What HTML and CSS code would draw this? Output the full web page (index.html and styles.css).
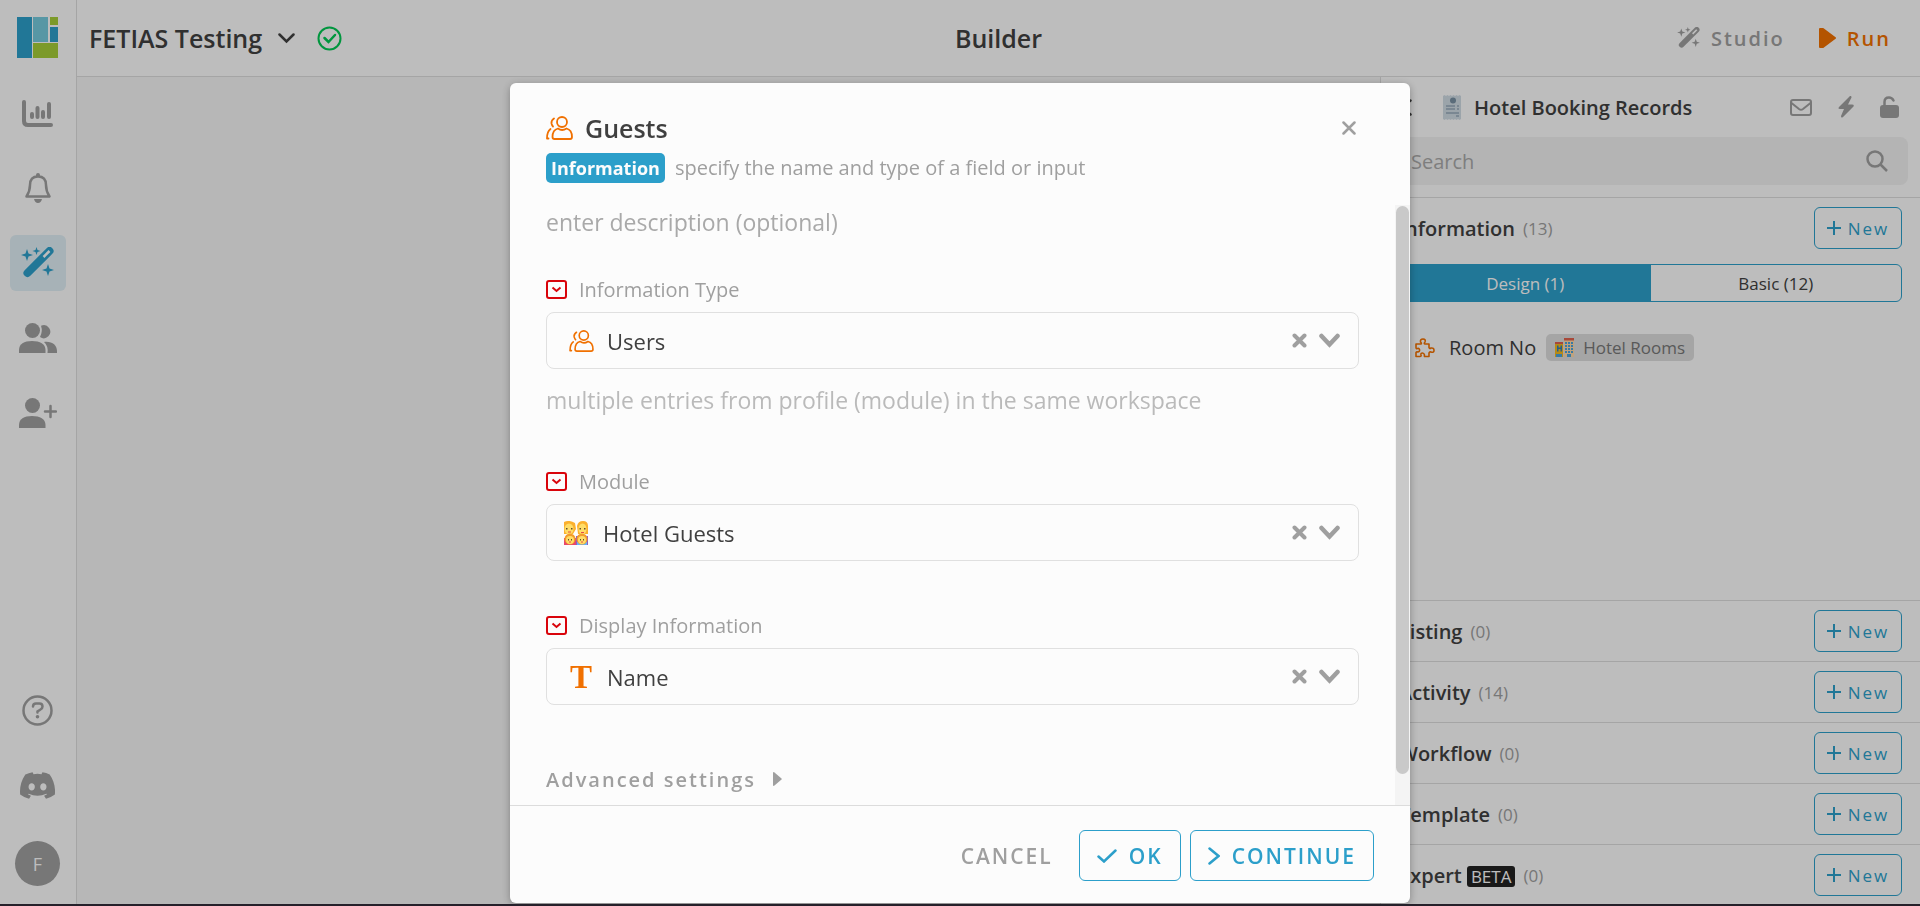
FILE: index.html
```html
<!DOCTYPE html>
<html lang="en">
<head>
  <meta charset="UTF-8">
  <meta name="viewport" content="width=device-width, initial-scale=1.0">
  <title>FETIAS Testing - Builder</title>
  <link rel="stylesheet" href="styles.css">
</head>
<body>
  <!-- shared icons -->
  <svg class="sprite" width="0" height="0" aria-hidden="true">
    <symbol id="i-wand" viewBox="0 0 32 32">
      <path d="M6 26 L28 4" stroke="currentColor" stroke-width="8" stroke-linecap="round"/>
      <path class="slot" d="M22 10 L28 4" stroke-width="2.500"/>
      <path fill="currentColor" d="M5.500 2 L7 6.500 L11.500 8 L7 9.500 L5.500 14 L4 9.500 L-.500 8 L4 6.500Z M15 0 L16 3 L19 4 L16 5 L15 8 L14 5 L11 4 L14 3Z M26.500 17 L28 21.500 L32.500 23 L28 24.500 L26.500 29 L25 24.500 L20.500 23 L25 21.500Z"/>
    </symbol>
    <symbol id="i-users" viewBox="0 0 27 24">
      <g fill="none" stroke="currentColor" stroke-width="1.800" stroke-linecap="round" stroke-linejoin="round">
        <circle cx="16" cy="6" r="5"/>
        <path d="M12 12.500 C8 13.500 6.500 17 6.500 21 Q6.500 23 8.500 23 H24 Q26 23 26 21 C26 17 24.500 13.500 20.500 12.500 Q16 15.500 12 12.500Z"/>
        <path d="M8 2.500 Q5 4.500 5.500 7.500 Q6 9.500 7 10.500 M4.500 13 Q1 15.500 1 22.500 H2.500"/>
      </g>
    </symbol>
    <symbol id="i-required" viewBox="0 0 21 19">
      <rect x="1" y="1" width="19" height="17" rx="2" fill="none" stroke="#d9040b" stroke-width="2"/>
      <path d="M6.500 7.500 L10.500 11 L14.500 7.500" fill="none" stroke="#d9040b" stroke-width="2"/>
    </symbol>
    <symbol id="i-clear" viewBox="0 0 15 15">
      <path d="M2.500 2.500 L12.500 12.500 M12.500 2.500 L2.500 12.500" stroke="currentColor" stroke-width="4" stroke-linecap="round"/>
    </symbol>
    <symbol id="i-down" viewBox="0 0 21 15">
      <path d="M2.500 3 L10.500 11.500 L18.500 3" fill="none" stroke="currentColor" stroke-width="4.500" stroke-linecap="round"/>
    </symbol>
    <symbol id="i-plus" viewBox="0 0 14 14">
      <path d="M7 0 V14 M0 7 H14" stroke="currentColor" stroke-width="2"/>
    </symbol>
  </svg>

  <div class="app">
    <nav class="sidebar">
      <a class="logo" href="#" aria-label="Home">
        <svg width="41" height="41" viewBox="0 0 41 41">
          <path fill="#2c9fca" d="M0 0h15v41H0z M33 10h8v15h-8z"/>
          <path fill="#74cadc" d="M16 0h15v25H16z"/>
          <path fill="#a6ce39" d="M33 0h8v8h-8z M16 26h25v15H16z"/>
        </svg>
      </a>
      <a class="nav-item" href="#" aria-label="Dashboard">
        <svg width="31" height="27" viewBox="0 0 31 27" fill="none" stroke="currentColor" stroke-width="4" stroke-linecap="round">
          <path d="M2 2 V21 Q2 25 6 25 H29"/>
          <path d="M10 14 V17 M15.500 8 V17 M21 12 V17 M27 4 V17"/>
        </svg>
      </a>
      <a class="nav-item" href="#" aria-label="Notifications">
        <svg width="28" height="30" viewBox="0 0 28 30">
          <path fill="none" stroke="currentColor" stroke-width="2.500" stroke-linejoin="round" d="M2.500 23.500 Q6 18 6 12 Q6 3.500 14 3.500 Q22 3.500 22 12 Q22 18 25.500 23.500Z"/>
          <path fill="currentColor" d="M12 3 V2 Q12 0 14 0 Q16 0 16 2 V3Z M10 26 H18 Q17 30 14 30 Q11 30 10 26Z"/>
        </svg>
      </a>
      <a class="nav-item active" href="#" aria-label="Builder">
        <svg width="33" height="32"><use href="#i-wand"/></svg>
      </a>
      <a class="nav-item" href="#" aria-label="Users">
        <svg width="38" height="30" viewBox="0 0 38 30" fill="currentColor">
          <circle cx="13.500" cy="7.500" r="7.500"/>
          <path d="M0 30 V27 C0 21 5 18 13 18 C21 18 26.500 21 26.500 27 V30Z"/>
          <path d="M22 2.800 A6.500 6.500 0 1 1 21 14 Q24 8.500 22 2.800Z M25 19 C33 18 38 22 38 28 V30 H28.500 Q29.500 23 25 19Z"/>
        </svg>
      </a>
      <a class="nav-item" href="#" aria-label="Invite user">
        <svg width="38" height="30" viewBox="0 0 38 30" fill="currentColor">
          <circle cx="13.500" cy="7.500" r="7.500"/>
          <path d="M0 30 V27 C0 21 5 18 13 18 C21 18 26.500 21 26.500 27 V30Z"/>
          <path d="M31.500 8 V19 M26 13.500 H37" stroke="currentColor" stroke-width="2.500" stroke-linecap="round"/>
        </svg>
      </a>
      <div class="nav-bottom">
        <a class="nav-item" href="#" aria-label="Help">
          <svg width="31" height="31" viewBox="0 0 31 31" fill="none" stroke="currentColor" stroke-width="2.500">
            <circle cx="15.500" cy="15.500" r="14"/>
            <path stroke-linecap="round" d="M11 11.500 Q11 8.500 14 8.500 H17.500 Q20.500 8.500 20.500 11.500 Q20.500 13.500 18.500 14.500 L15.500 16.500 V17.500"/>
            <circle cx="15.500" cy="21.800" r="1.800" fill="currentColor" stroke="none"/>
          </svg>
        </a>
        <a class="nav-item" href="#" aria-label="Discord">
          <svg width="35" height="27" viewBox="0 0 127 96">
            <path fill="currentColor" d="M107.700 8.070A105 105 0 0 0 81.470 0a72 72 0 0 0-3.360 6.830 98 98 0 0 0-29.110 0A72 72 0 0 0 45.640 0a106 106 0 0 0-26.250 8.090C2.790 32.650-1.710 56.600.540 80.210a106 106 0 0 0 32.170 16.150 78 78 0 0 0 6.890-11.110 68 68 0 0 1-10.850-5.180c.910-.660 1.800-1.340 2.660-2a76 76 0 0 0 64.320 0c.870.710 1.760 1.390 2.660 2a69 69 0 0 1-10.870 5.190 77 77 0 0 0 6.890 11.100 106 106 0 0 0 32.190-16.140c2.640-27.380-4.510-51.110-18.900-72.150ZM42.450 65.690C36.180 65.690 31 60 31 53s5-12.740 11.430-12.740S54 46 53.890 53s-5.050 12.690-11.440 12.690Zm42.240 0C78.410 65.690 73.250 60 73.250 53s5-12.740 11.440-12.740S96.230 46 96.120 53s-5.040 12.690-11.430 12.690Z"/>
          </svg>
        </a>
        <button class="avatar">F</button>
      </div>
    </nav>

    <div class="workspace">
      <header class="topbar">
        <div class="topbar-left">
          <button class="app-name">FETIAS Testing
            <svg width="17" height="11" viewBox="0 0 17 11"><path d="M1.500 1.500 L8.500 8.500 L15.500 1.500" fill="none" stroke="currentColor" stroke-width="2.500" stroke-linecap="round"/></svg>
          </button>
          <svg class="saved" width="25" height="25" viewBox="0 0 25 25" fill="none" stroke="#00c853" stroke-width="2">
            <circle cx="12.500" cy="12.500" r="11"/>
            <path d="M7.500 12 L11.500 16 L18 9" stroke-width="2.500" stroke-linecap="round"/>
          </svg>
        </div>
        <h1>Builder</h1>
        <div class="topbar-right">
          <button class="studio"><svg width="23" height="22"><use href="#i-wand"/></svg>Studio</button>
          <button class="run"><svg width="17" height="20" viewBox="0 0 17 20"><path fill="currentColor" stroke="currentColor" stroke-width="2" stroke-linejoin="round" d="M1 1 H4 L16 10 L4 19 H1Z"/></svg>Run</button>
        </div>
      </header>

      <div class="main">
        <main class="canvas"></main>
        <aside class="panel">
          <div class="panel-head">
            <button class="icon-btn" aria-label="Back"><svg width="13" height="17" viewBox="0 0 13 17"><path d="M11.500 1.500 L3 8.500 L11.500 15.500" fill="none" stroke="#404040" stroke-width="2.500" stroke-linecap="round"/></svg></button>
            <svg class="receipt" width="20" height="25" viewBox="0 0 20 25">
              <path fill="#cfdbe3" d="M0 1 l1.500 -1 1.500 1 1.500 -1 1.500 1 1.500 -1 1.500 1 1.500 -1 1.500 1 1.500 -1 1.500 1 1.500 -1 1.500 1 V24 l-1.500 1 -1.500 -1 -1.500 1 -1.500 -1 -1.500 1 -1.500 -1 -1.500 1 -1.500 -1 -1.500 1 -1.500 -1 -1.500 1 -1.500 -1Z"/>
              <circle cx="10" cy="5.500" r="3" fill="#7890a3"/>
              <path d="M3 11 H12 M14 11 H16 M3 14 H12 M14 14 H16 M3 18 H16 M13 21 H16" stroke="#7890a3" stroke-width="1.200"/>
            </svg>
            <h2>Hotel Booking Records</h2>
            <div class="panel-actions">
              <button class="icon-btn" aria-label="Mail"><svg width="22" height="17" viewBox="0 0 22 17" fill="none" stroke="currentColor" stroke-width="2"><rect x="1" y="1" width="20" height="15" rx="2"/><path d="M1.500 4 L9 10 Q11 11.500 13 10 L20.500 4"/></svg></button>
              <button class="icon-btn" aria-label="Automation"><svg width="16" height="22" viewBox="0 0 16 22"><path fill="currentColor" d="M12 0 L1 11 Q-.500 13 2 13 H6 L3 20 Q3 22.500 5 21 L15.500 10.500 Q16.500 8.500 14 8.500 H10 L13.500 1.500 Q13.500 -.500 12 0Z"/></svg></button>
              <button class="icon-btn" aria-label="Unlock"><svg width="19" height="22" viewBox="0 0 19 22"><path d="M4.500 11 V6 Q4.500 1.500 9 1.500 Q12 1.500 13.500 4.500" fill="none" stroke="currentColor" stroke-width="2.500" stroke-linecap="round"/><rect y="9" width="19" height="13" rx="3" fill="currentColor"/></svg></button>
            </div>
          </div>
          <div class="search">
            <input type="text" placeholder="Search" aria-label="Search">
            <svg width="22" height="22" viewBox="0 0 22 22" fill="none" stroke="currentColor" stroke-width="2.500"><circle cx="9" cy="9" r="7.500"/><path d="M14.500 14.500 L21 21"/></svg>
          </div>

          <section class="section grow">
            <div class="section-head">
              <h3>Information</h3><span class="count">(13)</span>
              <button class="new-btn"><svg width="14" height="14"><use href="#i-plus"/></svg>New</button>
            </div>
            <div class="tabs">
              <button class="tab selected">Design (1)</button>
              <button class="tab">Basic (12)</button>
            </div>
            <div class="field-row">
              <svg width="20" height="20" viewBox="0 0 20 20" fill="none" stroke="#f07000" stroke-width="1.600" stroke-linejoin="round">
                <path d="M1 6 H6 Q7 5.500 5.500 4 Q5 1 8 1 Q11 1 10 4 Q8.500 5.500 10 6 H14 V9.500 Q14.500 11 16 10 Q19 9.500 19 12.500 Q19 15 16 14 Q14.500 13.500 14 15 V18.500 H10 Q9 18.500 9.500 17 Q9 15 7.500 15 Q5.500 15 6 17 Q6.500 18.500 5 18.500 H1 V14.500 Q1.500 13.500 3 14 Q5 13.500 4.500 11.500 Q4 10 2.500 10.500 Q1 11 1 9.500Z"/>
              </svg>
              <span class="field-name">Room No</span>
              <a class="tag" href="#">
                <svg width="19" height="19" viewBox="0 0 19 19">
                  <path fill="#f5b81e" d="M0 5h8v14H0z"/>
                  <path fill="#ffd9a8" d="M9 1h10v18H9z"/>
                  <path fill="#e0604c" d="M0 4h8v2H0z M9 0h10v2.500H9z"/>
                  <path fill="#2f7fb8" d="M2 7.500h1.500v2h2v-2H7v6H5.500v-2.500h-2v2.500H2z"/>
                  <path fill="#4aa3dd" d="M10 4h2v2h-2z M13 4h2v2h-2z M16 4h2v2h-2z M10 7h2v2h-2z M13 7h2v2h-2z M16 7h2v2h-2z M10 10h2v2h-2z M13 10h2v2h-2z M16 10h2v2h-2z M10 13h2v2h-2z M13 13h2v2h-2z M16 13h2v2h-2z M1 16h6v3H1z M12 16h4v3h-4z"/>
                </svg>Hotel Rooms
              </a>
            </div>
          </section>
          <section class="section">
            <div class="section-head">
              <h3>Listing</h3><span class="count">(0)</span>
              <button class="new-btn"><svg width="14" height="14"><use href="#i-plus"/></svg>New</button>
            </div>
          </section>
          <section class="section">
            <div class="section-head">
              <h3>Activity</h3><span class="count">(14)</span>
              <button class="new-btn"><svg width="14" height="14"><use href="#i-plus"/></svg>New</button>
            </div>
          </section>
          <section class="section">
            <div class="section-head">
              <h3>Workflow</h3><span class="count">(0)</span>
              <button class="new-btn"><svg width="14" height="14"><use href="#i-plus"/></svg>New</button>
            </div>
          </section>
          <section class="section">
            <div class="section-head">
              <h3>Template</h3><span class="count">(0)</span>
              <button class="new-btn"><svg width="14" height="14"><use href="#i-plus"/></svg>New</button>
            </div>
          </section>
          <section class="section">
            <div class="section-head">
              <h3>Expert <span class="beta">BETA</span></h3><span class="count">(0)</span>
              <button class="new-btn"><svg width="14" height="14"><use href="#i-plus"/></svg>New</button>
            </div>
          </section>
        </aside>
      </div>
    </div>
  </div>

  <div class="overlay">
    <div class="modal" role="dialog" aria-labelledby="modal-title">
      <div class="modal-head">
        <div class="modal-title">
          <svg width="27" height="24"><use href="#i-users"/></svg>
          <h2 id="modal-title">Guests</h2>
          <button class="icon-btn" aria-label="Close"><svg width="14" height="14" viewBox="0 0 14 14"><path d="M1.500 1.500 L12.500 12.500 M12.500 1.500 L1.500 12.500" stroke="currentColor" stroke-width="2.500" stroke-linecap="round"/></svg></button>
        </div>
        <p class="modal-sub"><span class="badge">Information</span>specify the name and type of a field or input</p>
      </div>

      <div class="modal-scroll">
        <div class="modal-body">
          <input class="description" type="text" placeholder="enter description (optional)" aria-label="Description">

          <div class="field">
            <label for="infoType"><svg width="21" height="19"><use href="#i-required"/></svg>Information Type</label>
            <div class="select-box">
              <span class="select-icon"><svg width="25" height="22"><use href="#i-users"/></svg></span>
              <select id="infoType"><option>Users</option></select>
              <button class="icon-btn" aria-label="Clear"><svg width="15" height="15"><use href="#i-clear"/></svg></button>
              <svg class="arrow" width="21" height="15"><use href="#i-down"/></svg>
            </div>
            <p class="hint">multiple entries from profile (module) in the same workspace</p>
          </div>

          <div class="field">
            <label for="module"><svg width="21" height="19"><use href="#i-required"/></svg>Module</label>
            <div class="select-box emoji">
              <span class="select-icon">
                <svg width="24" height="24" viewBox="0 0 24 24">
                  <path fill="#fbb02d" d="M0 1 Q6 -1.500 11 2 L12 8 L9 13 H0Z M13 5 Q14 0 19 0 Q24 0 24 5 V13 H14Z"/>
                  <ellipse cx="5" cy="8" rx="4.500" ry="5.500" fill="#ffdd67"/>
                  <ellipse cx="18.500" cy="8" rx="4" ry="5.500" fill="#ffdd67"/>
                  <path fill="#e8476a" d="M0 17 H12 V24 H0Z"/>
                  <path fill="#8f5cc0" d="M12 15 H24 V24 H12Z"/>
                  <path fill="#64b5f6" d="M13 21 H23 V24 H13Z"/>
                  <circle cx="6" cy="18" r="5.500" fill="#f39c2b"/>
                  <circle cx="18" cy="18" r="5.500" fill="#f39c2b"/>
                  <circle cx="6" cy="19" r="4" fill="#ffdd67"/>
                  <circle cx="18" cy="19" r="4" fill="#ffdd67"/>
                  <path d="M2 7h1.500v1.500H2z M7 7h1.500v1.500H7z M15.500 7h1.500v1.500h-1.500z M20 7h1.500v1.500H20z M4 18h1v1.500H4z M7 18h1v1.500H7z M16 18h1v1.500h-1z M19 18h1v1.500h-1z" fill="#664e27"/>
                  <path d="M4 11 H7 M17 11.500 H20 M5 21 H7 M17 21 H19" stroke="#e24b4b" stroke-width="1"/>
                </svg>
              </span>
              <select id="module"><option>Hotel Guests</option></select>
              <button class="icon-btn" aria-label="Clear"><svg width="15" height="15"><use href="#i-clear"/></svg></button>
              <svg class="arrow" width="21" height="15"><use href="#i-down"/></svg>
            </div>
          </div>

          <div class="field">
            <label for="display"><svg width="21" height="19"><use href="#i-required"/></svg>Display Information</label>
            <div class="select-box">
              <span class="select-icon letter">T</span>
              <select id="display"><option>Name</option></select>
              <button class="icon-btn" aria-label="Clear"><svg width="15" height="15"><use href="#i-clear"/></svg></button>
              <svg class="arrow" width="21" height="15"><use href="#i-down"/></svg>
            </div>
          </div>

          <button class="advanced">Advanced settings
            <svg width="9" height="14" viewBox="0 0 9 14"><path fill="currentColor" d="M0 1 Q0 -.500 1.500 .500 L8.500 6.500 Q9 7 8.500 7.500 L1.500 13.500 Q0 14.500 0 13Z"/></svg>
          </button>
        </div>
        <div class="scroll-track"><div class="scroll-thumb"></div></div>
      </div>

      <div class="modal-foot">
        <button class="btn-cancel">CANCEL</button>
        <button class="btn"><svg width="20" height="14" viewBox="0 0 20 14"><path d="M1.500 7.500 L7 12.500 L18.500 1.500" fill="none" stroke="currentColor" stroke-width="2.500" stroke-linecap="round"/></svg>OK</button>
        <button class="btn"><svg width="12" height="18" viewBox="0 0 12 18"><path d="M1.500 1.500 L10.500 9 L1.500 16.500" fill="none" stroke="currentColor" stroke-width="2.500" stroke-linecap="round"/></svg>CONTINUE</button>
      </div>
    </div>
  </div>
  <div class="bottom-edge"></div>
</body>
</html>
```
FILE: styles.css
```css
* {
  box-sizing: border-box;
}
body {
  margin: 0;
  font-family: "Open Sans", "Noto Sans", sans-serif;
  font-size: 18px;
  color: #404040;
  background-color: #fcfcfc;
}
h1, h2, h3, p {
  margin: 0;
}
h1, h2, h3 {
  font-weight: 600;
}
button, input, select {
  font-family: inherit;
  color: inherit;
  background: none;
  border: none;
  outline: none;
  padding: 0;
}
button {
  display: flex;
  align-items: center;
  cursor: pointer;
}
svg {
  display: block;
  flex: none;
}
a {
  color: inherit;
  text-decoration: none;
}
::placeholder {
  color: #a9a9a9;
  opacity: 1;
}
.sprite {
  position: absolute;
}
.slot {
  stroke: #fcfcfc;
}
.icon-btn {
  color: #9f9f9f;
}

/* layout */
.app {
  display: flex;
  height: 100vh;
  overflow: hidden;
}
.workspace {
  flex: 1;
  display: flex;
  flex-direction: column;
  min-width: 0;
}
.main {
  flex: 1;
  display: flex;
  min-height: 0;
}
.canvas {
  flex: 1;
  background-color: #f5f5f5;
}

/* sidebar */
.sidebar {
  width: 77px;
  border-right: 1px solid #dcdcdc;
  display: flex;
  flex-direction: column;
  align-items: center;
  gap: 19px;
  padding: 17px 1px 20px 0;
  color: #9f9f9f;
}
.logo {
  margin-bottom: 8px;
}
.nav-item {
  width: 56px;
  height: 56px;
  display: flex;
  align-items: center;
  justify-content: center;
  border-radius: 6px;
}
.nav-item.active {
  background-color: #dfeef4;
  color: #2c9fca;
}
.nav-bottom {
  margin-top: auto;
  display: flex;
  flex-direction: column;
  align-items: center;
  gap: 19px;
}
.avatar {
  width: 45px;
  height: 45px;
  margin-top: 9px;
  border-radius: 50%;
  background-color: #9f9f9f;
  color: #fcfcfc;
  font-size: 18px;
  justify-content: center;
}

/* top bar */
.topbar {
  height: 77px;
  border-bottom: 1px solid #dcdcdc;
  display: grid;
  grid-template-columns: 1fr auto 1fr;
  align-items: center;
  padding: 0 12px;
}
.topbar h1 {
  font-size: 25px;
}
.topbar-left {
  display: flex;
  align-items: center;
  gap: 16px;
}
.app-name {
  gap: 16px;
  font-size: 25px;
  font-weight: 600;
}
.saved {
  margin-left: 6px;
}
.topbar-right {
  display: flex;
  justify-content: flex-end;
  gap: 34px;
  padding-right: 17px;
}
.topbar-right button {
  gap: 11px;
  font-size: 20px;
  font-weight: 600;
  letter-spacing: 2px;
}
.studio {
  color: #9f9f9f;
}
.run {
  color: #f07000;
}

/* right panel */
.panel {
  width: 540px;
  padding-bottom: 1px;
  border-left: 1px solid #dcdcdc;
  display: flex;
  flex-direction: column;
  background-color: #fcfcfc;
}
.panel-head {
  height: 60px;
  display: flex;
  align-items: center;
  padding: 0 21px 0 18px;
}
.panel-head h2 {
  font-size: 20px;
}
.receipt {
  margin: 0 11px 0 31px;
}
.panel-actions {
  margin-left: auto;
  display: flex;
  align-items: center;
  gap: 26px;
}
.search {
  display: flex;
  align-items: center;
  height: 48px;
  margin: 0 12px 12px 12px;
  padding: 0 20px 0 18px;
  border-radius: 8px;
  background-color: #f0f0f0;
  color: #9f9f9f;
}
.search input {
  flex: 1;
  font-size: 20px;
}
.section {
  border-top: 1px solid #dcdcdc;
  padding: 9px 18px;
}
.section.grow {
  flex: 1;
}
.section-head {
  display: flex;
  align-items: center;
  height: 42px;
}
.section-head h3 {
  font-size: 20px;
}
.count {
  margin-left: 8px;
  font-size: 17px;
  color: #9f9f9f;
}
.beta {
  display: inline-block;
  padding: 0 4px;
  border-radius: 3px;
  background-color: #222;
  color: #fcfcfc;
  font-size: 17px;
  font-weight: 400;
  line-height: 21px;
}
.new-btn {
  width: 88px;
  height: 42px;
  margin-left: auto;
  justify-content: center;
  gap: 7px;
  border: 1px solid #2c9fca;
  border-radius: 6px;
  color: #2c9fca;
  font-size: 17px;
  letter-spacing: 2px;
}
.tabs {
  display: flex;
  height: 38px;
  margin-top: 15px;
  border: 1px solid #2c9fca;
  border-radius: 6px;
  overflow: hidden;
}
.tab {
  flex: 1;
  justify-content: center;
  font-size: 17px;
}
.tab.selected {
  background-color: #2c9fca;
  color: #fcfcfc;
}
.field-row {
  display: flex;
  align-items: center;
  margin-top: 32px;
  padding-left: 16px;
}
.field-name {
  margin: 0 10px 0 14px;
  font-size: 20px;
}
.tag {
  display: flex;
  align-items: center;
  gap: 9px;
  height: 27px;
  padding: 0 9px;
  border-radius: 5px;
  background-color: #dcdcdc;
  color: #777;
  font-size: 17px;
}

/* modal */
.overlay {
  position: fixed;
  inset: 0;
  display: flex;
  justify-content: center;
  padding: 83px 0 3px;
  background-color: rgba(0, 0, 0, 0.25);
}
.modal {
  width: 900px;
  display: flex;
  flex-direction: column;
  border-radius: 6px;
  background-color: #fcfcfc;
  box-shadow: 0 2px 8px rgba(0, 0, 0, 0.3);
}
.modal-head {
  height: 122px;
  padding: 28px 54px 0 36px;
}
.modal-title {
  display: flex;
  align-items: center;
  gap: 12px;
  height: 34px;
  color: #f07000;
}
.modal-title h2 {
  font-size: 25px;
  color: #404040;
}
.modal-title .icon-btn {
  margin-left: auto;
}
.modal-sub {
  display: flex;
  align-items: center;
  gap: 10px;
  margin-top: 8px;
  font-size: 20px;
  line-height: 26px;
  color: #9f9f9f;
}
.badge {
  padding: 0 5px;
  border-radius: 5px;
  background-color: #2c9fca;
  color: #fcfcfc;
  font-size: 18px;
  font-weight: 700;
  line-height: 30px;
}
.modal-scroll {
  flex: 1;
  display: flex;
  min-height: 0;
}
.modal-body {
  flex: 1;
  overflow-y: auto;
  scrollbar-width: none;
  padding: 0 36px 42px;
}
.scroll-track {
  width: 15px;
  padding: 1px;
  background-color: #f4f4f4;
}
.scroll-thumb {
  height: 95%;
  border-radius: 7px;
  background-color: #c9c9c9;
}
.description {
  display: block;
  width: 100%;
  height: 34px;
  margin-bottom: 36px;
  font-size: 23px;
}
.field {
  margin-bottom: 50px;
}
.field label {
  display: flex;
  align-items: center;
  gap: 12px;
  height: 28px;
  margin-bottom: 9px;
  font-size: 20px;
  color: #9f9f9f;
}
.select-box {
  display: flex;
  align-items: center;
  height: 57px;
  padding: 0 18px 0 17px;
  border: 1px solid #e0e0e0;
  border-radius: 8px;
}
.select-icon {
  width: 34px;
  margin-right: 9px;
  display: flex;
  justify-content: center;
  color: #f07000;
}
.select-icon.letter {
  font-family: "Liberation Serif", serif;
  font-size: 33px;
  font-weight: 700;
  line-height: 30px;
}
.emoji .select-icon {
  width: 24px;
  margin-right: 15px;
}
.select-box select {
  flex: 1;
  appearance: none;
  font-size: 22px;
}
.arrow {
  margin-left: 12px;
  color: #9f9f9f;
}
.hint {
  height: 34px;
  margin-top: 14px;
  font-size: 23px;
  line-height: 34px;
  color: #bababa;
}
.advanced {
  height: 28px;
  margin-top: 60px;
  gap: 17px;
  font-size: 20px;
  font-weight: 600;
  letter-spacing: 2px;
  color: #9f9f9f;
}
.modal-foot {
  display: flex;
  align-items: center;
  justify-content: flex-end;
  gap: 9px;
  height: 98px;
  padding: 2px 36px 0;
  border-top: 1px solid #dcdcdc;
}
.modal-foot button {
  justify-content: center;
  font-size: 21px;
  font-weight: 600;
  letter-spacing: 2px;
}
.btn {
  gap: 12px;
  height: 51px;
  padding: 0 17px;
  border: 1px solid #2c9fca;
  border-radius: 6px;
  color: #2c9fca;
}
.modal-foot .btn-cancel {
  padding: 0 17px;
  color: #9f9f9f;
}
.bottom-edge {
  position: fixed;
  left: 0;
  right: 0;
  bottom: 0;
  height: 2px;
  background-color: #25202a;
}
```
